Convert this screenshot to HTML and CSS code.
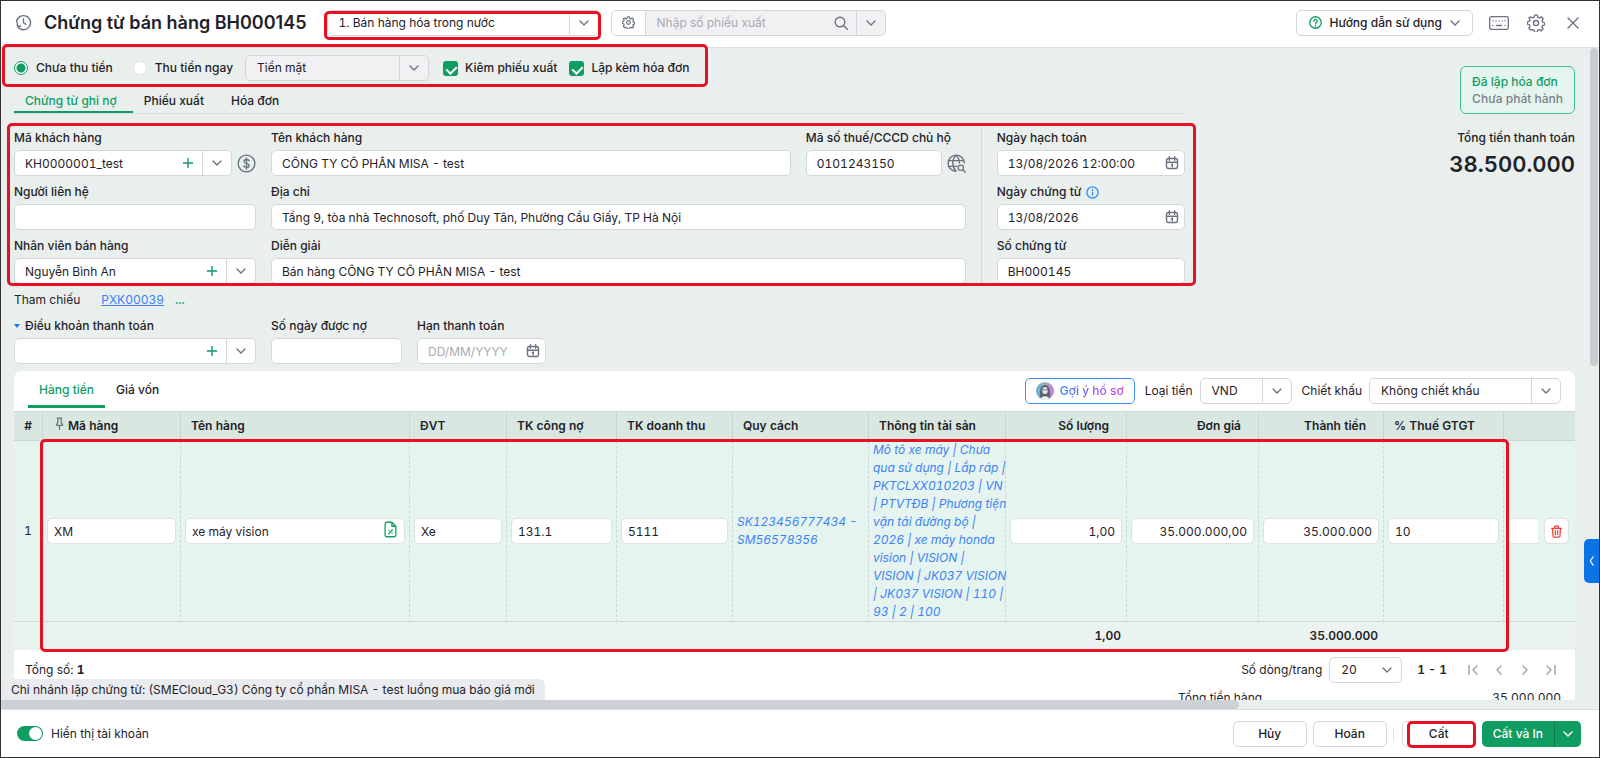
FILE: index.html
```html
<!DOCTYPE html>
<html lang="vi">
<head>
    <meta charset="UTF-8">
    <meta name="viewport" content="width=device-width, initial-scale=1.0">
    <title>Chứng từ bán hàng BH000145</title>
    <link rel="stylesheet" href="styles.css">
</head>
<body>
    <!-- icons shared by the page -->
    <svg class="sprite" aria-hidden="true">
        <symbol id="i-chevron" viewBox="0 0 10 10"><path d="M1 3l4 4 4-4" /></symbol>
        <symbol id="i-plus" viewBox="0 0 10 10"><path d="M5 0v10M0 5h10" /></symbol>
        <symbol id="i-calendar" viewBox="0 0 14 14">
            <rect x="1.5" y="2.5" width="11" height="10" rx="2" />
            <path d="M1.5 6.3h11M4.3 .8v3.4M9.7 .8v3.4M6.3 8.6l1-.5v2.7" />
        </symbol>
        <symbol id="i-gear" viewBox="0 0 24 24">
            <circle cx="12" cy="12" r="3.4" />
            <path d="M10.2 1.5h3.6l.7 2.9 2 .9 2.6-1.5 2.5 2.5-1.5 2.6.9 2 2.5.9v2.7l-2.7.9-.8 2 1.5 2.4-2.5 2.6-2.7-1.5-2 .8-.8 2.8h-3.2l-.9-2.8-2-.8L4.9 21.5l-2.5-2.5 1.5-2.6-.8-2-2.6-.8v-3.2l2.7-.9.8-2-1.5-2.5L5 3.8l2.5 1.5 2-.9z" />
        </symbol>
    </svg>

    <header class="topbar">
        <svg class="icon history" viewBox="0 0 18 18">
            <path d="M2.5 13A7.5 7.5 0 1 0 1.5 8.5M2.5 13v-3.5M2.5 13h3.5M9 5v4.3l2.5 1.7" />
        </svg>
        <h1 class="title">Chứng từ bán hàng BH000145</h1>
        <div class="marked sale-type">
            <div class="select">
                <select aria-label="Loại chứng từ">
                    <option>1. Bán hàng hóa trong nước</option>
                </select>
                <span class="arrow"><svg class="icon"><use href="#i-chevron" /></svg></span>
            </div>
            <span class="mark"></span>
        </div>
        <div class="search">
            <button class="search-gear" aria-label="Thiết lập tìm kiếm"><svg class="icon"><use href="#i-gear" /></svg></button>
            <input type="text" placeholder="Nhập số phiếu xuất" aria-label="Nhập số phiếu xuất">
            <svg class="icon lens" viewBox="0 0 14 14"><circle cx="6" cy="6" r="4.8" /><path d="M9.5 9.5l4 4" /></svg>
            <button class="search-more" aria-label="Chọn phiếu xuất"><svg class="icon chev"><use href="#i-chevron" /></svg></button>
        </div>
        <div class="top-actions">
            <button class="btn help">
                <svg class="icon" viewBox="0 0 14 14"><circle cx="7" cy="7" r="6.2" /><path d="M5.2 5.6a1.8 1.8 0 1 1 2.7 1.5c-.6.3-.9.6-.9 1.2M7 10v.9" /></svg>
                Hướng dẫn sử dụng
                <svg class="icon chev"><use href="#i-chevron" /></svg>
            </button>
            <button class="icon-btn" aria-label="Bàn phím">
                <svg class="icon keyboard" viewBox="0 0 20 14"><rect x=".7" y=".7" width="18.6" height="12.6" rx="1.5" /><path d="M4 5h.1M7 5h.1M10 5h.1M13 5h.1M16 5h.1M4 9.5h.1M7.5 9.5h5M16 9.5h.1" /></svg>
            </button>
            <button class="icon-btn" aria-label="Thiết lập"><svg class="icon gear"><use href="#i-gear" /></svg></button>
            <button class="icon-btn" aria-label="Đóng"><svg class="icon close" viewBox="0 0 12 12"><path d="M1 1l10 10M11 1L1 11" /></svg></button>
        </div>
    </header>

    <main class="workspace">
        <div class="page">
            <div class="upper">
                <div class="voucher">
                    <div class="marked options">
                        <label class="choice"><input type="radio" name="payment" checked>Chưa thu tiền</label>
                        <label class="choice"><input type="radio" name="payment">Thu tiền ngay</label>
                        <div class="select muted pay-method">
                            <select aria-label="Hình thức thanh toán">
                                <option>Tiền mặt</option>
                            </select>
                            <span class="arrow"><svg class="icon"><use href="#i-chevron" /></svg></span>
                        </div>
                        <label class="choice tight"><input type="checkbox" checked>Kiêm phiếu xuất</label>
                        <label class="choice tight"><input type="checkbox" checked>Lập kèm hóa đơn</label>
                        <span class="mark"></span>
                    </div>

                    <nav class="tabs">
                        <a href="#debt" class="active">Chứng từ ghi nợ</a>
                        <a href="#delivery">Phiếu xuất</a>
                        <a href="#invoice">Hóa đơn</a>
                    </nav>

                    <div class="marked form">
                        <div class="col-left">
                            <div class="field">
                                <label for="customer">Mã khách hàng</label>
                                <div class="line">
                                    <div class="combo">
                                        <input type="text" id="customer" value="KH0000001_test">
                                        <button class="add" aria-label="Thêm khách hàng"><svg class="icon"><use href="#i-plus" /></svg></button>
                                        <button class="drop" aria-label="Chọn khách hàng"><svg class="icon"><use href="#i-chevron" /></svg></button>
                                    </div>
                                    <svg class="icon side-icon" viewBox="0 0 20 20"><circle cx="10" cy="10" r="8.8" /><path d="M12.8 7.2c-.4-1-1.5-1.4-2.8-1.4-1.6 0-2.7.8-2.7 2 0 2.8 5.5 1.4 5.5 4.3 0 1.2-1.2 2-2.8 2-1.5 0-2.6-.6-2.9-1.7M10 4v12" /></svg>
                                </div>
                            </div>
                            <div class="field">
                                <label for="contact">Người liên hệ</label>
                                <input type="text" id="contact" class="text">
                            </div>
                            <div class="field">
                                <label for="seller">Nhân viên bán hàng</label>
                                <div class="combo">
                                    <input type="text" id="seller" value="Nguyễn Bình An">
                                    <button class="add" aria-label="Thêm nhân viên"><svg class="icon"><use href="#i-plus" /></svg></button>
                                    <button class="drop" aria-label="Chọn nhân viên"><svg class="icon"><use href="#i-chevron" /></svg></button>
                                </div>
                            </div>
                        </div>
                        <div class="col-mid">
                            <div class="pair">
                                <div class="field grow">
                                    <label for="customer-name">Tên khách hàng</label>
                                    <input type="text" id="customer-name" class="text" value="CÔNG TY CỔ PHẦN MISA - test">
                                </div>
                                <div class="field tax">
                                    <label for="tax-code">Mã số thuế/CCCD chủ hộ</label>
                                    <div class="line">
                                        <input type="text" id="tax-code" class="text" value="0101243150">
                                        <svg class="icon side-icon" viewBox="0 0 20 20"><path d="M18.2 9.5A8.5 8.5 0 1 0 9.5 18.2M1.2 7h16.4M1.2 13h9M9.5 1.2C5 6 5 13.5 9.5 18.2M9.5 1.2c2.6 2.6 3.6 5.5 3.5 8.3" /><circle cx="14.5" cy="14.5" r="2.8" /><path d="M16.6 16.6l2.6 2.6" /></svg>
                                    </div>
                                </div>
                            </div>
                            <div class="field">
                                <label for="address">Địa chỉ</label>
                                <input type="text" id="address" class="text" value="Tầng 9, tòa nhà Technosoft, phố Duy Tân, Phường Cầu Giấy, TP Hà Nội">
                            </div>
                            <div class="field">
                                <label for="note">Diễn giải</label>
                                <input type="text" id="note" class="text" value="Bán hàng CÔNG TY CỔ PHẦN MISA - test">
                            </div>
                        </div>
                        <div class="col-right">
                            <div class="field">
                                <label for="post-date">Ngày hạch toán</label>
                                <div class="combo">
                                    <input type="text" id="post-date" value="13/08/2026 12:00:00">
                                    <svg class="icon calendar"><use href="#i-calendar" /></svg>
                                </div>
                            </div>
                            <div class="field">
                                <label for="doc-date">Ngày chứng từ
                                    <svg class="icon info" viewBox="0 0 14 14"><circle cx="7" cy="7" r="6" /><path d="M7 6.5v3.5M7 4v.8" /></svg>
                                </label>
                                <div class="combo">
                                    <input type="text" id="doc-date" value="13/08/2026">
                                    <svg class="icon calendar"><use href="#i-calendar" /></svg>
                                </div>
                            </div>
                            <div class="field">
                                <label for="doc-no">Số chứng từ</label>
                                <input type="text" id="doc-no" class="text" value="BH000145">
                            </div>
                        </div>
                        <span class="mark"></span>
                    </div>

                    <div class="reference">
                        <span>Tham chiếu</span>
                        <a href="#PXK00039">PXK00039</a>
                        <button class="more">...</button>
                    </div>

                    <div class="terms">
                        <div class="field term">
                            <label for="term"><span class="caret"></span>Điều khoản thanh toán</label>
                            <div class="combo">
                                <input type="text" id="term">
                                <button class="add" aria-label="Thêm điều khoản"><svg class="icon"><use href="#i-plus" /></svg></button>
                                <button class="drop" aria-label="Chọn điều khoản"><svg class="icon"><use href="#i-chevron" /></svg></button>
                            </div>
                        </div>
                        <div class="field days">
                            <label for="days">Số ngày được nợ</label>
                            <input type="text" id="days" class="text">
                        </div>
                        <div class="field due">
                            <label for="due">Hạn thanh toán</label>
                            <div class="combo">
                                <input type="text" id="due" placeholder="DD/MM/YYYY">
                                <svg class="icon calendar"><use href="#i-calendar" /></svg>
                            </div>
                        </div>
                    </div>
                </div>

                <aside class="summary">
                    <div class="status">
                        <span class="done">Đã lập hóa đơn</span>
                        <span class="pending">Chưa phát hành</span>
                    </div>
                    <span class="total-label">Tổng tiền thanh toán</span>
                    <strong class="total">38.500.000</strong>
                </aside>
            </div>

            <section class="card">
                <div class="toolbar">
                    <nav class="card-tabs">
                        <a href="#items" class="active">Hàng tiền</a>
                        <a href="#cost">Giá vốn</a>
                    </nav>
                    <button class="btn suggest">
                        <svg class="avatar" viewBox="0 0 18 18">
                            <defs>
                                <linearGradient id="av" x1="0" x2="1"><stop offset="0" stop-color="#5fb3cf" /><stop offset=".5" stop-color="#9fb0c4" /><stop offset="1" stop-color="#c77bd0" /></linearGradient>
                            </defs>
                            <circle cx="9" cy="9" r="9" fill="url(#av)" />
                            <path d="M4 15c-.5-6 .5-12 5-12s5.5 5 5 12c-3 3-7 3-10 0z" fill="#596273" />
                            <ellipse cx="9" cy="8.5" rx="2.8" ry="3.6" fill="#dfe3ea" />
                            <path d="M5 16.5c1-3 7-3 8 0-2 2-6 2-8 0z" fill="#eef1f5" />
                            <path d="M6.5 7.8h2M9.7 7.8h2" stroke="#3b4252" />
                        </svg>
                        <span>Gợi ý hồ sơ</span>
                    </button>
                    <label for="currency">Loại tiền</label>
                    <div class="select currency">
                        <select id="currency"><option>VND</option></select>
                        <span class="arrow"><svg class="icon"><use href="#i-chevron" /></svg></span>
                    </div>
                    <label for="discount">Chiết khấu</label>
                    <div class="select discount">
                        <select id="discount"><option>Không chiết khấu</option></select>
                        <span class="arrow"><svg class="icon"><use href="#i-chevron" /></svg></span>
                    </div>
                </div>

                <div class="marked grid-wrap">
                    <table class="grid">
                        <colgroup>
                            <col class="c-no"><col class="c-code"><col class="c-name"><col class="c-unit"><col class="c-debt"><col class="c-rev"><col class="c-spec">
                            <col class="c-asset"><col class="c-qty"><col class="c-price"><col class="c-amount"><col class="c-vat"><col class="c-act">
                        </colgroup>
                        <thead>
                            <tr>
                                <th class="center">#</th>
                                <th><svg class="icon pin" viewBox="0 0 10 14"><path d="M2.5 1h5M3.2 1v4.5L1.5 9h7L6.8 5.5V1M5 9v4.5" /></svg>Mã hàng</th>
                                <th>Tên hàng</th>
                                <th>ĐVT</th>
                                <th>TK công nợ</th>
                                <th>TK doanh thu</th>
                                <th>Quy cách</th>
                                <th>Thông tin tài sản</th>
                                <th class="num">Số lượng</th>
                                <th class="num">Đơn giá</th>
                                <th class="num">Thành tiền</th>
                                <th>% Thuế GTGT</th>
                                <th></th>
                            </tr>
                        </thead>
                        <tbody>
                            <tr>
                                <td class="center">1</td>
                                <td><input type="text" class="cell" value="XM" aria-label="Mã hàng"></td>
                                <td>
                                    <div class="cell-icon">
                                        <input type="text" class="cell" value="xe máy vision" aria-label="Tên hàng">
                                        <svg class="icon file" viewBox="0 0 14 18"><path d="M8.5 1.2H3A1.8 1.8 0 0 0 1.2 3v12A1.8 1.8 0 0 0 3 16.8h8a1.8 1.8 0 0 0 1.8-1.8V5.5zM8.5 1.2v4.3h4.3M5 13.5l4-4M5.3 10h.1M8.7 13h.1" /></svg>
                                    </div>
                                </td>
                                <td><input type="text" class="cell" value="Xe" aria-label="ĐVT"></td>
                                <td><input type="text" class="cell" value="131.1" aria-label="TK công nợ"></td>
                                <td><input type="text" class="cell" value="5111" aria-label="TK doanh thu"></td>
                                <td><a href="#spec" class="detail">SK123456777434 -<br>SM56578356</a></td>
                                <td>
                                    <a href="#asset" class="detail">Mô tô xe máy | Chưa<br>
                                        qua sử dụng | Lắp ráp |<br>
                                        PKTCLXX010203 | VN<br>
                                        | PTVTĐB | Phương tiện<br>
                                        vận tải đường bộ |<br>
                                        2026 | xe máy honda<br>
                                        vision | VISION |<br>
                                        VISION | JK037 VISION<br>
                                        | JK037 VISION | 110 |<br>
                                        93 | 2 | 100</a>
                                </td>
                                <td><input type="text" class="cell num" value="1,00" aria-label="Số lượng"></td>
                                <td><input type="text" class="cell num" value="35.000.000,00" aria-label="Đơn giá"></td>
                                <td><input type="text" class="cell num" value="35.000.000" aria-label="Thành tiền"></td>
                                <td><input type="text" class="cell" value="10" aria-label="% Thuế GTGT"></td>
                                <td>
                                    <div class="row-actions">
                                        <input type="text" class="cell cut" aria-label="Tiền thuế GTGT">
                                        <button class="trash" aria-label="Xóa dòng">
                                            <svg class="icon" viewBox="0 0 12 14"><path d="M.5 3.5h11M4 3.3V1.2h4v2.1M1.7 3.5l.5 8.5c0 .8.5 1.2 1.2 1.2h5.2c.7 0 1.2-.4 1.2-1.2l.5-8.5M4.7 6v4.5M7.3 6v4.5" /></svg>
                                        </button>
                                    </div>
                                </td>
                            </tr>
                        </tbody>
                        <tfoot>
                            <tr>
                                <td colspan="8"></td>
                                <td class="num">1,00</td>
                                <td></td>
                                <td class="num">35.000.000</td>
                                <td colspan="2"></td>
                            </tr>
                        </tfoot>
                    </table>
                    <span class="mark"></span>
                </div>

                <div class="pager">
                    <span class="count">Tổng số: <b>1</b></span>
                    <label for="page-size">Số dòng/trang</label>
                    <div class="select plain page-size">
                        <select id="page-size"><option>20</option></select>
                        <span class="arrow"><svg class="icon"><use href="#i-chevron" /></svg></span>
                    </div>
                    <b class="range">1 - 1</b>
                    <div class="pages">
                        <button aria-label="Trang đầu"><svg class="icon" viewBox="0 0 10 10"><path d="M1 0v10M9 1L5 5l4 4" /></svg></button>
                        <button aria-label="Trang trước"><svg class="icon" viewBox="0 0 10 10"><path d="M7 1L3 5l4 4" /></svg></button>
                        <button aria-label="Trang sau"><svg class="icon" viewBox="0 0 10 10"><path d="M3 1l4 4-4 4" /></svg></button>
                        <button aria-label="Trang cuối"><svg class="icon" viewBox="0 0 10 10"><path d="M9 0v10M1 1l4 4-4 4" /></svg></button>
                    </div>
                </div>
                <div class="totals">
                    <span>Tổng tiền hàng</span>
                    <span>35.000.000</span>
                </div>
            </section>
        </div>

        <div class="h-scroll"><div class="h-thumb"></div></div>
        <div class="v-thumb"></div>
        <div class="branch">Chi nhánh lập chứng từ: (SMECloud_G3) Công ty cổ phần MISA - test luồng mua báo giá mới</div>
        <button class="expand" aria-label="Mở rộng"><svg class="icon" viewBox="0 0 6 12"><path d="M5 1L1.5 6 5 11" /></svg></button>
    </main>

    <footer class="bottombar">
        <label class="toggle"><input type="checkbox" checked>Hiển thị tài khoản</label>
        <div class="buttons">
            <button class="btn action">Hủy</button>
            <button class="btn action">Hoãn</button>
            <span class="sep"></span>
            <div class="marked save">
                <button class="btn action">Cất</button>
                <span class="mark"></span>
            </div>
            <div class="primary">
                <button>Cất và In</button>
                <button class="primary-more" aria-label="Thêm lựa chọn"><svg class="icon"><use href="#i-chevron" /></svg></button>
            </div>
        </div>
    </footer>
</body>
</html>
```

FILE: styles.css
```css
* {
    box-sizing: border-box;
}
body {
    margin: 0;
    height: 100vh;
    display: flex;
    flex-direction: column;
    border: 1px solid #333;
    overflow: hidden;
    background-color: #e9efed;
    color: #1f2229;
    font-family: Inter, "Liberation Sans", sans-serif;
    font-size: 12px;
    line-height: 20px;
    font-variant-numeric: tabular-nums;
}
button, input, select {
    font: inherit;
    font-variant-numeric: inherit;
    color: inherit;
    margin: 0;
}
button {
    cursor: pointer;
    padding: 0;
    border: none;
    background: none;
}
input, select {
    outline: none;
    min-width: 0;
}
a {
    color: inherit;
    text-decoration: none;
}
.sprite {
    position: absolute;
    width: 0;
    height: 0;
}
.icon {
    display: block;
    flex: none;
    width: 10px;
    height: 10px;
    fill: none;
    stroke: #6b7280;
    stroke-width: 1.4;
    stroke-linecap: round;
    stroke-linejoin: round;
}

/* red frames */
.marked {
    position: relative;
}
.mark {
    position: absolute;
    inset: -3px;
    border: 3px solid #e81123;
    border-radius: 5px;
    pointer-events: none;
}

/* top bar */
.topbar {
    display: flex;
    align-items: center;
    flex: none;
    height: 47px;
    padding: 0 20px 3px 14px;
    background: white;
    border-bottom: 1px solid #dcdfe2;
}
.history {
    width: 17px;
    height: 17px;
}
.title {
    margin: 0 20px 0 12px;
    font-size: 18px;
    font-weight: 600;
    font-variant-numeric: normal;
    line-height: 26px;
    white-space: nowrap;
}
.sale-type {
    width: 272px;
}
.sale-type .mark {
    inset: 1px -2px -4px -3px;
}
.select {
    position: relative;
    flex: none;
    height: 26px;
    background: white;
    border: 1px solid #d3d6db;
    border-radius: 5px;
}
.select select {
    width: 100%;
    height: 24px;
    padding: 0 36px 0 11px;
    border: none;
    background: none;
    appearance: none;
}
.arrow {
    position: absolute;
    top: 0;
    right: 0;
    width: 29px;
    height: 24px;
    display: flex;
    align-items: center;
    justify-content: center;
    border-left: 1px solid #d3d6db;
    pointer-events: none;
}
.select.plain .arrow {
    border-left: none;
}
.select.muted {
    background: #f1f1f3;
}
.search {
    display: flex;
    align-items: center;
    width: 275px;
    height: 26px;
    margin-left: 12px;
    border: 1px solid #d3d6db;
    border-radius: 5px;
    background: #f1f1f3;
    overflow: hidden;
}
.search-gear, .search-more {
    display: flex;
    align-items: center;
    justify-content: center;
    height: 24px;
    flex: none;
}
.search-gear {
    width: 34px;
    background: white;
    border-right: 1px solid #d3d6db;
}
.search-gear .icon {
    width: 13px;
    height: 13px;
    stroke-width: 2.2;
}
.search input {
    flex: 1;
    padding: 0 11px;
    border: none;
    background: none;
}
input::placeholder {
    color: #a6aab2;
    opacity: 1;
}
.lens {
    width: 14px;
    height: 14px;
    margin-right: 8px;
}
.search-more {
    width: 29px;
    border-left: 1px solid #d3d6db;
}
.top-actions {
    display: flex;
    align-items: center;
    margin-left: auto;
}
.btn {
    display: flex;
    align-items: center;
    justify-content: center;
    height: 26px;
    border: 1px solid #d3d6db;
    border-radius: 5px;
    background: white;
    font-weight: 500;
}
.help {
    gap: 8px;
    padding: 0 12px;
    margin-right: 16px;
}
.help .icon:first-child {
    width: 13px;
    height: 13px;
    stroke: #109d62;
}
.icon-btn + .icon-btn {
    margin-left: 18px;
}
.keyboard {
    width: 20px;
    height: 14px;
    stroke-width: 1.3;
}
.gear {
    width: 18px;
    height: 18px;
    stroke-width: 1.8;
}
.icon-btn + .icon-btn:last-child {
    margin-left: 22px;
}
.close {
    width: 12px;
    height: 12px;
}

/* workspace */
.workspace {
    position: relative;
    flex: 1;
    min-height: 0;
    display: flex;
    flex-direction: column;
}
/* starts a little over the top bar, so the first frame is not clipped */
.page {
    flex: 1;
    min-height: 0;
    overflow: hidden;
    margin-top: -4px;
    padding: 4px 24px 0 13px;
}
.upper {
    display: flex;
}
.voucher {
    flex: 0 0 75%;
}
.options {
    display: flex;
    align-items: center;
    padding-top: 7px;
    font-weight: 500;
    width: 690px;
}
.options .mark {
    inset: -4px -4px -6px -12px;
}
.choice {
    display: flex;
    align-items: center;
    gap: 8px;
    margin-right: 20px;
    white-space: nowrap;
}
.choice + .select {
    margin-left: -8px;
}
.choice.tight {
    gap: 7px;
    margin-right: 12px;
}
.choice input {
    appearance: none;
    width: 14px;
    height: 14px;
    background: white;
}
.choice input[type="radio"] {
    border: 1px solid #dfe2e5;
    border-radius: 50%;
}
.choice input[type="radio"]:checked {
    border-color: #109d62;
    background: radial-gradient(#109d62 4px, white 5px);
}
.choice input[type="checkbox"] {
    position: relative;
    width: 15px;
    height: 15px;
    border-radius: 3px;
    background: #109d62;
}
.choice input[type="checkbox"]::after {
    content: "";
    position: absolute;
    left: 5px;
    top: 3px;
    width: 5px;
    height: 8px;
    border: solid white;
    border-width: 0 2px 2px 0;
    transform: rotate(45deg);
}
.pay-method {
    width: 184px;
    margin-right: 14px;
    font-weight: 400;
}
.tabs {
    display: flex;
    gap: 5px;
    margin-top: 8px;
    border-bottom: 1px solid #dbdfdf;
    font-weight: 500;
}
.tabs a {
    height: 24px;
    padding: 2px 11px 0;
}
.tabs .active {
    color: #109d62;
    border-bottom: 2px solid #109d62;
    padding-right: 16px;
    margin-right: -5px;
}

/* voucher form */
.form {
    display: flex;
    padding-top: 14px;
}
.form .mark {
    inset: 9px -11px -2px -7px;
}
.col-left, .col-mid, .col-right {
    display: flex;
    flex-direction: column;
    gap: 6px;
}
.col-left {
    width: 242px;
    flex: none;
}
.col-mid {
    flex: 1;
    margin: 0 15px;
}
.col-right {
    width: 204px;
    flex: none;
    padding-left: 15px;
    border-left: 1px solid #d3d9d8;
}
.pair {
    display: flex;
    gap: 15px;
}
.grow {
    flex: 1;
}
.tax {
    width: 160px;
}
.field {
    min-width: 0;
}
.field label {
    display: flex;
    align-items: center;
    margin-bottom: 2px;
    font-weight: 500;
    white-space: nowrap;
}
.line {
    display: flex;
    align-items: center;
    justify-content: space-between;
    gap: 5px;
}
.text, .combo {
    display: flex;
    align-items: center;
    flex: 1;
    width: 100%;
    min-width: 0;
    height: 26px;
    background: white;
    border: 1px solid #d3d6db;
    border-radius: 5px;
}
.text, .combo input {
    padding: 0 10px;
}
.combo input {
    flex: 1;
    height: 24px;
    border: none;
    background: none;
}
.add, .drop {
    display: flex;
    align-items: center;
    justify-content: center;
    flex: none;
    height: 24px;
    width: 29px;
}
.add .icon {
    stroke: #109d62;
}
.drop {
    border-left: 1px solid #d3d6db;
}
.side-icon {
    width: 19px;
    height: 19px;
}
.calendar {
    width: 14px;
    height: 14px;
    margin-right: 5px;
}
.info {
    width: 13px;
    height: 13px;
    margin-left: 5px;
    stroke: #2f8bf5;
}
.reference {
    display: flex;
    align-items: center;
    margin-top: 6px;
}
.reference a {
    margin: 0 11px 0 21px;
    color: #3b82f6;
    text-decoration: underline;
}
.more {
    color: #109d62;
    font-weight: 600;
}
.terms {
    display: flex;
    gap: 15px;
    margin-top: 6px;
}
.term {
    width: 242px;
}
.days {
    width: 131px;
}
.due {
    width: 129px;
}
.caret {
    width: 0;
    height: 0;
    margin-right: 5px;
    border: 3px solid transparent;
    border-top: 4px solid #1677ff;
    border-bottom: none;
}

/* invoice state and grand total */
.summary {
    flex: 1;
    display: flex;
    flex-direction: column;
    align-items: flex-end;
}
.status {
    display: flex;
    flex-direction: column;
    margin-top: 18px;
    padding: 6px 11px;
    border: 1px solid #3cc486;
    border-radius: 6px;
    background: #e5f4ee;
    line-height: 17px;
    font-weight: 500;
}
.done {
    color: #109d62;
}
.pending {
    color: #7b818c;
}
.total-label {
    margin-top: 14px;
    font-weight: 500;
}
.total {
    font-size: 22px;
    font-weight: 600;
    line-height: 32px;
}

/* items card */
.card {
    margin-top: 7px;
    background: white;
    border-radius: 8px 8px 0 0;
}
.toolbar {
    display: flex;
    align-items: center;
    height: 40px;
    padding: 0 14px;
}
.card-tabs {
    display: flex;
    align-self: flex-start;
    margin-right: auto;
    font-weight: 500;
}
.card-tabs a {
    height: 37px;
    padding: 9px 11px 0;
}
.card-tabs .active {
    color: #109d62;
    border-bottom: 3px solid #109d62;
}
.suggest {
    gap: 6px;
    padding: 0 10px;
    border-color: #3b8ff5;
}
.suggest span {
    background: linear-gradient(90deg, #2f7cf6, #d43df0);
    background-clip: text;
    -webkit-background-clip: text;
    color: transparent;
}
.avatar {
    width: 18px;
    height: 18px;
}
.toolbar label {
    margin: 0 7px 0 10px;
}
.currency {
    width: 92px;
}
.discount {
    width: 192px;
}
.grid {
    width: 100%;
    table-layout: fixed;
    border-collapse: separate;
    border-spacing: 0;
}
.c-no { width: 29px; }
.c-code { width: 138px; }
.c-unit { width: 97px; }
.c-debt { width: 110px; }
.c-rev { width: 116px; }
.c-spec { width: 136px; }
.c-asset { width: 137px; }
.c-qty { width: 121px; }
.c-price { width: 132px; }
.c-amount { width: 125px; }
.c-vat { width: 120px; }
.c-act { width: 71px; }
.grid th {
    height: 30px;
    padding: 0 10px;
    background: #d9e7e1;
    border-top: 1px solid #d0d8d6;
    border-bottom: 1px solid #cdd5d4;
    border-right: 1px solid #cdd3d6;
    text-align: left;
    font-weight: 600;
    white-space: nowrap;
}
.grid th.num {
    padding-right: 17px;
}
.grid th:last-child, .grid tbody td:last-child {
    border-right: none;
}
.grid .num {
    text-align: right;
}
.grid .center {
    padding: 0;
    text-align: center;
}
.pin {
    display: inline-block;
    width: 9px;
    height: 13px;
    margin: 0 4px 0 2px;
}
.grid tbody td {
    height: 180px;
    padding: 0 4px;
    background: #e5f4ee;
    border-right: 1px dashed #ccd8d5;
    border-bottom: 1px solid #cfd8d6;
}
.grid tfoot td {
    height: 28px;
    padding: 0 6px;
    background: #ebf3f0;
    font-weight: 600;
}
.cell {
    display: block;
    width: 100%;
    height: 26px;
    padding: 0 6px;
    background: white;
    border: 1px solid #dde3e2;
    border-radius: 5px;
}
.cell-icon {
    position: relative;
}
.file {
    position: absolute;
    right: 8px;
    top: 3px;
    width: 13px;
    height: 17px;
    stroke: #109d62;
}
.detail {
    display: block;
    color: #3b82f6;
    font-style: italic;
    line-height: 18px;
    white-space: nowrap;
}
.row-actions {
    display: flex;
    gap: 6px;
}
.cell.cut {
    width: 30px;
    border-right: none;
    border-radius: 5px 0 0 5px;
}
.trash {
    display: flex;
    align-items: center;
    justify-content: center;
    width: 25px;
    height: 26px;
    background: white;
    border: 1px solid #dde3e2;
    border-radius: 5px;
}
.trash .icon {
    width: 11px;
    height: 13px;
    stroke: #ee4438;
}
.grid-wrap .mark {
    inset: 28px 66px -2px 26px;
}
.pager {
    display: flex;
    align-items: center;
    padding: 7px 16px 5px 11px;
}
.count {
    margin-right: auto;
}
.pager label {
    margin-right: 7px;
}
.page-size {
    width: 73px;
}
.range {
    margin: 0 18px 0 15px;
    font-weight: 600;
}
.pages {
    display: flex;
    gap: 10px;
}
.pages button {
    width: 16px;
    height: 16px;
    display: flex;
    align-items: center;
    justify-content: center;
}
.pages .icon {
    stroke: #9ba1ab;
}
.totals {
    display: flex;
    justify-content: space-between;
    width: 397px;
    margin-left: auto;
    padding: 0 14px 40px 0;
}

/* scrollbars and floating parts */
.h-scroll {
    flex: none;
    height: 10px;
    border-bottom: 1px solid #dcdfe2;
}
.h-thumb {
    width: 77.5%;
    height: 9px;
    background: #cdd0d4;
    border-radius: 0 5px 5px 0;
}
.v-thumb {
    position: absolute;
    top: 0;
    right: 1px;
    width: 8px;
    height: 48%;
    background: #c9cdd2;
    border-radius: 4px;
}
.branch {
    position: absolute;
    left: 0;
    bottom: 10px;
    padding: 1px 10px 0;
    background: #e9ebef;
    border-radius: 0 6px 0 0;
}
.expand {
    position: absolute;
    right: 0;
    top: 491px;
    width: 15px;
    height: 44px;
    display: flex;
    align-items: center;
    justify-content: center;
    background: #0a73e8;
    border-radius: 5px 0 0 5px;
}
.expand .icon {
    width: 5px;
    height: 10px;
    stroke: white;
}

/* bottom bar */
.bottombar {
    display: flex;
    align-items: center;
    justify-content: space-between;
    flex: none;
    height: 47px;
    padding: 0 18px 0 16px;
    background: white;
}
.toggle {
    display: flex;
    align-items: center;
    gap: 8px;
}
.toggle input {
    appearance: none;
    position: relative;
    width: 26px;
    height: 15px;
    border-radius: 8px;
    background: #109d62;
}
.toggle input::before {
    content: "";
    position: absolute;
    right: 1px;
    top: 1px;
    width: 13px;
    height: 13px;
    border-radius: 50%;
    background: white;
}
.buttons {
    display: flex;
    align-items: center;
    gap: 6px;
}
.action {
    width: 74px;
}
.sep {
    width: 1px;
    height: 14px;
    margin-right: 2px;
    background: #dfe2e5;
}
.save .mark {
    inset: 0 0 -1px 5px;
}
.primary {
    display: flex;
    height: 26px;
    border-radius: 5px;
    background: #109d62;
    overflow: hidden;
}
.primary button {
    padding: 0 11px;
    color: white;
    font-weight: 500;
}
.primary .primary-more {
    padding: 0 8px;
    border-left: 1px solid #0b7d4d;
}
.primary .icon {
    stroke: white;
}
```
